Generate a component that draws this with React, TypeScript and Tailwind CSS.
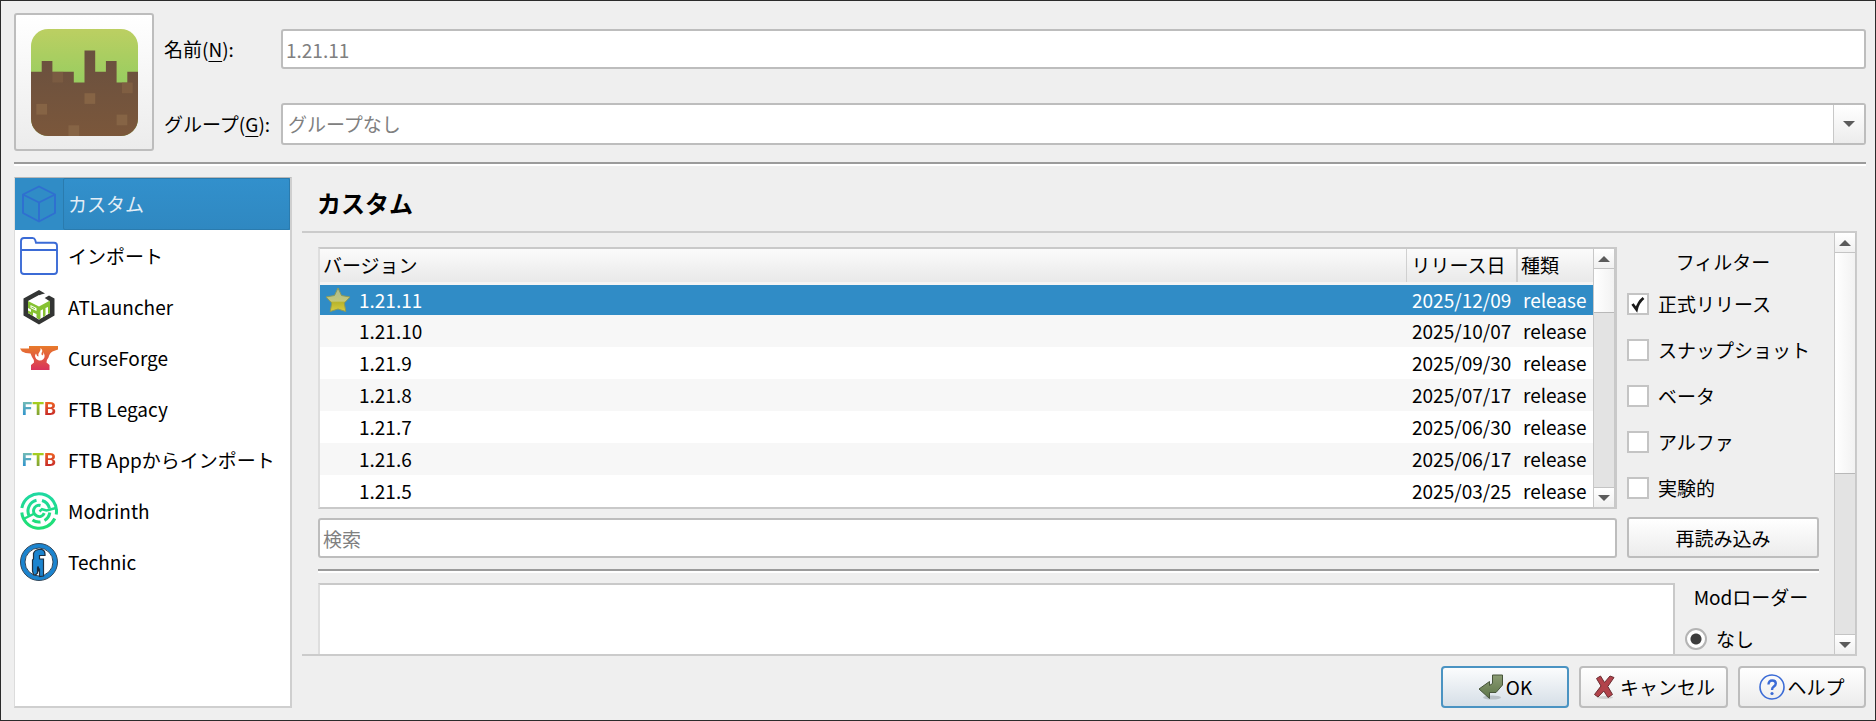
import { clsx } from "clsx";
import type { ReactNode } from "react";

interface Version {
  id: string;
  date: string;
  type: string;
}

const versions: Version[] = [
  { id: "1.21.11", date: "2025/12/09", type: "release" },
  { id: "1.21.10", date: "2025/10/07", type: "release" },
  { id: "1.21.9", date: "2025/09/30", type: "release" },
  { id: "1.21.8", date: "2025/07/17", type: "release" },
  { id: "1.21.7", date: "2025/06/30", type: "release" },
  { id: "1.21.6", date: "2025/06/17", type: "release" },
  { id: "1.21.5", date: "2025/03/25", type: "release" },
];

const filters = [
  { label: "正式リリース", checked: true },
  { label: "スナップショット", checked: false },
  { label: "ベータ", checked: false },
  { label: "アルファ", checked: false },
  { label: "実験的", checked: false },
];

function GrassIcon() {
  return (
    <svg viewBox="0 0 100 100" className="size-[107px]" aria-hidden>
      <defs>
        <linearGradient id="grass" x1="0" y1="0" x2="0" y2="1">
          <stop offset="0" stopColor="#bccf62" />
          <stop offset="0.5" stopColor="#98cd60" />
        </linearGradient>
        <linearGradient id="dirt" x1="0" y1="0" x2="0" y2="1">
          <stop offset="0" stopColor="#69503f" />
          <stop offset="1" stopColor="#7b573b" />
        </linearGradient>
        <clipPath id="block">
          <rect width="100" height="100" rx="16" />
        </clipPath>
      </defs>
      <g clipPath="url(#block)">
        <rect width="100" height="100" fill="url(#grass)" />
        <path
          d="M0 40H10V30H20V40H40V50H50V20H60V40H70V30H80V50H90V40H100V100H0Z"
          fill="url(#dirt)"
        />
        <g fill="#866445">
          <rect x="20" y="40" width="10" height="10" opacity="0.5" />
          <rect x="85" y="50" width="10" height="10" opacity="0.7" />
          <rect x="50" y="60" width="10" height="10" />
          <rect x="5" y="70" width="10" height="10" />
          <rect x="80" y="80" width="10" height="10" />
          <rect x="35" y="90" width="10" height="10" />
        </g>
      </g>
    </svg>
  );
}

function CubeIcon() {
  return (
    <svg
      viewBox="0 0 38 38"
      className="size-[38px]"
      fill="none"
      stroke="#2f6fd0"
      strokeWidth="1.9"
      strokeLinejoin="round"
      aria-hidden
    >
      <path d="M19 1.5 35 9.5V28L19 36.5 3 28V9.5ZM3 9.5 19 17.5 35 9.5M19 17.5V36.5" />
    </svg>
  );
}

function FolderIcon() {
  return (
    <svg
      viewBox="0 0 38 38"
      className="size-[38px]"
      fill="none"
      stroke="#3b6bd6"
      strokeWidth="1.9"
      aria-hidden
    >
      <path d="M1 34V4Q1 1 4 1H12.500Q14.500 1 15.200 3L16 5.800H34Q37 5.800 37 8.800V34Q37 37 34 37H4Q1 37 1 34ZM1 13H37" />
    </svg>
  );
}

function ATLauncherIcon() {
  return (
    <svg viewBox="0 0 38 38" className="size-[38px]" aria-hidden>
      <path
        d="M25 5.500 19 2 3.500 10.500V27.500L19 36.500 34.500 27.500V10.500L29 7.500 23 11 29.500 14.500V25L19 31.500 8.500 25V13.500L21 6.500Z"
        fill="#333534"
      />
      <path d="M19 7 25.500 10.500 30 13.500V25L19 31.500 8 25V13Z" fill="#fff" />
      <path
        d="M8 13 19 18.500 30 12.500V25L28 26V19L25.500 20V27.500L23 29V21.300L20.500 22.500V31L18 31 16.500 29.500V26L13 24.500V28L8 25V22.500L11 24V21.500L8 20Z"
        fill="#86c232"
      />
      <path d="M10.500 17 16.500 20V23L10.500 20Z" fill="#fff" />
      <path d="M11.500 18.500 15 20.300V21.300L11.500 19.600Z" fill="#86c232" />
    </svg>
  );
}

function CurseForgeIcon() {
  return (
    <svg viewBox="0 0 38 38" className="size-[38px]" aria-hidden>
      <defs>
        <linearGradient id="forge" x1="0" y1="0" x2="0" y2="1">
          <stop offset="0" stopColor="#e87b2a" />
          <stop offset="1" stopColor="#d9335c" />
        </linearGradient>
      </defs>
      <path
        d="M9 7H38V10.500L32.500 12.500Q29.500 14 28.500 18.500 26 21.500 26.500 23.500L29.500 26V31H11V26L14 23.500Q14.500 21 12 18L10.500 14.500Q5 14.500 2 12.500L0 9.500H9Z"
        fill="url(#forge)"
      />
      <path
        d="M20.500 9Q23.500 11.500 21.500 14 21 15.500 22.500 16.500 24 15 23 13 26 17 23.500 20 21.500 22 19 21.500 15.500 20.500 15 17 15 15.500 16 14.500 16.500 17 18.500 17.500 17.500 15 19.500 13 21 11 20.500 9Z"
        fill="#fff"
      />
    </svg>
  );
}

function FtbIcon() {
  return (
    <span
      className="flex size-[38px] items-center justify-center font-[Roboto,sans-serif] text-[19px] leading-[38px] font-bold"
      aria-hidden
    >
      <span className="bg-linear-to-b from-[#74bcb4] from-30% to-[#258fce] to-70% bg-clip-text text-transparent">
        F
      </span>
      <span className="bg-linear-to-b from-[#a9d31c] from-30% to-[#7c9b34] to-70% bg-clip-text text-transparent">
        T
      </span>
      <span className="bg-linear-to-b from-[#ef6320] from-30% to-[#c32128] to-70% bg-clip-text text-transparent">
        B
      </span>
    </span>
  );
}

function ModrinthIcon() {
  return (
    <svg
      viewBox="0 0 38 38"
      className="size-[38px]"
      fill="none"
      stroke="url(#rinth)"
      strokeWidth="3"
      aria-hidden
    >
      <defs>
        <linearGradient
          id="rinth"
          gradientUnits="userSpaceOnUse"
          x1="0"
          y1="0"
          x2="0"
          y2="38"
        >
          <stop offset="0" stopColor="#1fd8a4" />
          <stop offset="1" stopColor="#1fe070" />
        </linearGradient>
      </defs>
      <path d="M1.800 16A17.400 17.400 0 0 1 36.200 22.500" />
      <path d="M34.800 26.500A17.400 17.400 0 0 1 1.800 20.500" />
      <path d="M16.500 8.300A11 11 0 0 0 9.200 24" />
      <path d="M22 8.500A11 11 0 0 1 29.500 16.500" />
      <path d="M29.800 20.500A11 11 0 0 1 24.500 28.500" />
      <path d="M20.500 30A11 11 0 0 1 12.500 28" />
      <path d="M20.500 13.500A5.600 5.600 0 1 0 24.300 21.200" />
      <path d="M19.500 19.500 22 17.200 26.500 18.500 36 16" strokeWidth="2.500" />
      <path d="M3.500 27 9.500 24 14.500 21.500" strokeWidth="2.500" />
    </svg>
  );
}

function TechnicIcon() {
  return (
    <svg viewBox="0 0 38 38" className="size-[38px]" aria-hidden>
      <circle cx="19" cy="19" r="18.500" fill="#1b84cf" stroke="#33475a" />
      <circle cx="19" cy="19" r="14" fill="#fff" stroke="#33475a" />
      <path
        d="M13.500 31.500 12.500 28V17L13.500 16V10.500Q14.500 7 18.500 6.500H22Q25 7.500 25 11V12.500H19.500V16H23.500V33L19.500 33.500V26L17.500 25.500V30L15.500 32Z"
        fill="#1b84cf"
        stroke="#203040"
        strokeWidth="1.200"
      />
      <path d="M17 23.500H19V28L17.500 30Z" fill="#16283a" />
    </svg>
  );
}

function StarIcon() {
  return (
    <svg viewBox="0 0 26 26" className="size-[26px]" aria-hidden>
      <defs>
        <linearGradient id="star" x1="0" y1="0" x2="0" y2="1">
          <stop offset="0" stopColor="#a9bb93" />
          <stop offset="0.55" stopColor="#c3c77a" />
          <stop offset="0.62" stopColor="#b9b52c" />
          <stop offset="1" stopColor="#d8cc40" />
        </linearGradient>
      </defs>
      <path
        d="M13 1 16.500 8.500 25 10 19.300 16 20.800 24.500 13 22 5.200 24.500 6.700 16 1 10 9.500 8.500Z"
        fill="url(#star)"
        stroke="#8d9a58"
        strokeLinejoin="round"
      />
    </svg>
  );
}

function OkIcon() {
  return (
    <svg viewBox="0 0 26 26" className="size-[26px]" aria-hidden>
      <defs>
        <linearGradient id="enter" x1="0" y1="0" x2="0" y2="1">
          <stop offset="0" stopColor="#8b9c74" />
          <stop offset="1" stopColor="#5c7447" />
        </linearGradient>
      </defs>
      <ellipse cx="14" cy="23.500" rx="9" ry="2" fill="#b9c1c6" />
      <path
        d="M14.500 1H24.500V11L18 18.500H11.500V24.500L1 15 11.500 7.500V11.500L14.500 9.500Z"
        fill="url(#enter)"
        stroke="#46543a"
        strokeLinejoin="round"
      />
    </svg>
  );
}

function CancelIcon() {
  return (
    <svg viewBox="0 0 26 26" className="size-[26px]" aria-hidden>
      <ellipse cx="13" cy="23.500" rx="8" ry="1.500" fill="#cfcfcf" />
      <path
        d="M4.500 4.500 8.500 2 12.500 8.500 18 2 22 3.500 15.800 12.500 20.500 20.500 16 23.500 11.800 17 6 23 2.500 20.500 9 12Z"
        fill="#b2434b"
        stroke="#6b2c31"
        strokeLinejoin="round"
      />
    </svg>
  );
}

function HelpIcon() {
  return (
    <svg
      viewBox="0 0 26 26"
      className="size-[26px]"
      fill="none"
      stroke="#3b6bd6"
      aria-hidden
    >
      <circle cx="13" cy="13" r="12" strokeWidth="1.600" />
      <path
        d="M9.500 10.500Q9.500 6.500 13.200 6.500 16.800 6.500 16.800 9.600 16.800 11.400 14.800 12.600 13 13.800 13 16"
        strokeWidth="2.400"
      />
      <circle cx="13" cy="19.500" r="1.600" fill="#3b6bd6" stroke="none" />
    </svg>
  );
}

function Arrow({ up = false }: { up?: boolean }) {
  return (
    <svg viewBox="0 0 12 6" className="h-[6px] w-3" fill="#5b5b5b" aria-hidden>
      <path d={up ? "M6 0 12 6H0Z" : "M0 0H12L6 6Z"} />
    </svg>
  );
}

// thumbClass sets the share of the track that is in view
function ScrollBar({
  label,
  thumbClass,
}: {
  label: string;
  thumbClass: string;
}) {
  return (
    <div className="flex w-[22px] shrink-0 flex-col border-x border-[#c8c8c8] bg-[#e3e3e3]">
      <button
        type="button"
        aria-label={`${label} 上へ`}
        className="flex h-5 shrink-0 items-center justify-center border-b border-[#c4c4c4] bg-linear-to-b from-white to-[#f0f0f0]"
      >
        <Arrow up />
      </button>
      <div className="min-h-0 flex-1">
        <div
          className={clsx(
            "border-b border-[#b8b8b8] bg-linear-to-r from-white to-[#f2f2f2]",
            thumbClass,
          )}
        />
      </div>
      <button
        type="button"
        aria-label={`${label} 下へ`}
        className="flex h-5 shrink-0 items-center justify-center border-t border-[#c4c4c4] bg-linear-to-b from-white to-[#f0f0f0]"
      >
        <Arrow />
      </button>
    </div>
  );
}

const sources: { label: string; icon: ReactNode }[] = [
  { label: "カスタム", icon: <CubeIcon /> },
  { label: "インポート", icon: <FolderIcon /> },
  { label: "ATLauncher", icon: <ATLauncherIcon /> },
  { label: "CurseForge", icon: <CurseForgeIcon /> },
  { label: "FTB Legacy", icon: <FtbIcon /> },
  { label: "FTB Appからインポート", icon: <FtbIcon /> },
  { label: "Modrinth", icon: <ModrinthIcon /> },
  { label: "Technic", icon: <TechnicIcon /> },
];

function InstanceHeader() {
  return (
    <header className="flex gap-[10px] border-b-2 border-[#9b9b9b] pb-[11px]">
      <button
        type="button"
        aria-label="アイコン"
        className="flex h-[138px] w-[140px] shrink-0 items-center justify-center rounded-[3px] border-2 border-[#bdbdbd] bg-linear-to-b from-white to-[#ececec]"
      >
        <GrassIcon />
      </button>
      <div className="flex flex-1 flex-col justify-between pt-4 pb-[6px]">
        <div className="flex items-center">
          <label htmlFor="name" className="w-[117px] shrink-0">
            名前(<span className="underline underline-offset-4">N</span>):
          </label>
          <input
            id="name"
            type="text"
            placeholder="1.21.11"
            className="h-10 min-w-0 flex-1 rounded-[3px] border-2 border-[#bdbdbd] bg-white px-[3px] placeholder:text-[#808080]"
          />
        </div>
        <div className="flex items-center">
          <label htmlFor="group" className="w-[117px] shrink-0">
            グループ(<span className="underline underline-offset-4">G</span>):
          </label>
          <div className="relative flex-1">
            <select
              id="group"
              className="block h-[42px] w-full appearance-none rounded-[3px] border-2 border-[#bdbdbd] bg-white px-[5px] text-[#808080]"
            >
              <option>グループなし</option>
            </select>
            <span className="pointer-events-none absolute inset-y-[2px] right-[2px] flex w-[31px] items-center justify-center border-l border-[#c8c8c8] bg-linear-to-b from-white to-[#ececec]">
              <Arrow />
            </span>
          </div>
        </div>
      </div>
    </header>
  );
}

function SourceList() {
  return (
    <nav className="w-[278px] shrink-0 border-t border-r-2 border-b-2 border-l border-t-[#b8b8b8] border-r-[#cfcfcf] border-b-[#cfcfcf] border-l-[#dcdcdc] bg-white">
      {sources.map((source, index) => (
        <button
          key={source.label}
          type="button"
          aria-current={index === 0 ? "page" : undefined}
          className={clsx(
            "flex w-full items-center text-left",
            index === 0
              ? "h-[52px] bg-[#308cc6] text-[#e3eef6]"
              : "h-[51px] text-black",
          )}
        >
          <span className="pl-[5px]">{source.icon}</span>
          <span
            className={clsx(
              "ml-[5px] flex h-full flex-1 items-center border pl-1 whitespace-nowrap",
              index === 0
                ? "rounded-[2px] border-[#2a7bae] bg-linear-to-b from-[#3290cc] to-[#2f88c1]"
                : "border-transparent",
            )}
          >
            {source.label}
          </span>
        </button>
      ))}
    </nav>
  );
}

function VersionTable() {
  return (
    <div className="flex min-w-0 border-2 border-[#c9c9c9] border-l-[#dedede] bg-white">
      <table className="flex-1 table-fixed border-collapse text-left">
        <colgroup>
          <col />
          <col className="w-[111px]" />
          <col className="w-[76px]" />
        </colgroup>
        <thead>
          <tr className="h-[34px] border-b-[3px] border-[#f4f4f4]">
            <th className="border-r border-b-2 border-[#b0b0b0] border-r-[#d0d0d0] bg-linear-to-b from-[#fbfbfb] to-[#e9e9e9] px-[3px] font-normal">
              バージョン
            </th>
            <th className="border-r-2 border-b-2 border-[#b0b0b0] border-r-[#d0d0d0] bg-linear-to-b from-[#fbfbfb] to-[#e9e9e9] pl-[5px] font-normal whitespace-nowrap">
              リリース日
            </th>
            <th className="border-b-2 border-[#b0b0b0] bg-linear-to-b from-[#fbfbfb] to-[#e9e9e9] pl-[3px] font-normal">
              種類
            </th>
          </tr>
        </thead>
        <tbody>
          {versions.map((version, index) => (
            <tr
              key={version.id}
              className={clsx(
                "h-8",
                index === 0
                  ? "bg-[#308cc6] text-white"
                  : "odd:bg-white even:bg-[#f7f7f7]",
              )}
            >
              <td className="p-0">
                <span className="flex items-center gap-2">
                  <span className="ml-[5px] size-[26px]">
                    {index === 0 && <StarIcon />}
                  </span>
                  {version.id}
                </span>
              </td>
              <td className="p-0 pl-[6px]">{version.date}</td>
              <td className="p-0 pl-[6px]">{version.type}</td>
            </tr>
          ))}
        </tbody>
      </table>
      <ScrollBar label="バージョン" thumbClass="h-[20%]" />
    </div>
  );
}

function FilterPanel() {
  return (
    <fieldset className="flex w-[192px] shrink-0 flex-col">
      <legend className="w-full pt-px text-center leading-7">フィルター</legend>
      <div className="flex flex-col gap-[18px] pt-[14px]">
        {filters.map((filter) => (
          <label
            key={filter.label}
            className="flex h-7 items-center gap-[9px] whitespace-nowrap"
          >
            <span className="relative flex size-[22px]">
              <input
                type="checkbox"
                defaultChecked={filter.checked}
                className="peer size-[22px] appearance-none border-2 border-[#c4c4c4] bg-white"
              />
              <svg
                viewBox="0 0 22 22"
                className="pointer-events-none absolute inset-0 hidden size-[22px] peer-checked:block"
                fill="none"
                stroke="#1a1a1a"
                strokeWidth="2.800"
                aria-hidden
              >
                <path d="M5.500 11 9.500 16.500Q11 9.500 16.500 5" />
              </svg>
            </span>
            {filter.label}
          </label>
        ))}
      </div>
    </fieldset>
  );
}

function CustomPage() {
  return (
    <div className="flex min-h-0 flex-1 border-y-2 border-r border-[#cbcbcb]">
      <div className="min-w-0 flex-1 overflow-hidden pt-[14px] pr-[15px] pl-4">
        <div className="flex gap-[10px]">
          <div className="flex min-w-0 flex-1 flex-col gap-[9px]">
            <VersionTable />
            <input
              type="search"
              aria-label="検索"
              placeholder="検索"
              className="h-10 rounded-[3px] border-2 border-[#bdbdbd] bg-white px-[3px] placeholder:text-[#808080]"
            />
          </div>
          <div className="flex flex-col justify-between">
            <FilterPanel />
            <button
              type="button"
              className="h-[41px] rounded-[3px] border-2 border-[#bdbdbd] bg-linear-to-b from-white to-[#ececec]"
            >
              再読み込み
            </button>
          </div>
        </div>
        <hr className="mt-[11px] border-t-2 border-[#9b9b9b]" />
        <div className="flex gap-2 border-t-2 border-white pt-[10px]">
          <div className="h-[240px] flex-1 border-2 border-[#c9c9c9] border-l-[#dedede] bg-white" />
          <fieldset className="w-[136px]">
            <legend className="w-full text-center leading-7">
              Modローダー
            </legend>
            <label className="flex items-center gap-[9px] pt-[14px] pl-[2px] leading-7">
              <input
                type="radio"
                name="loader"
                defaultChecked
                className="size-[22px] appearance-none rounded-full border-2 border-[#b4b4b4] bg-[radial-gradient(circle,#3d3d3d_5px,#fff_6px)]"
              />
              なし
            </label>
          </fieldset>
        </div>
      </div>
      <ScrollBar label="ページ" thumbClass="h-[58%]" />
    </div>
  );
}

function DialogButton({
  icon,
  children,
  className,
}: {
  icon: ReactNode;
  children: ReactNode;
  className: string;
}) {
  return (
    <button
      type="button"
      className={clsx(
        "flex h-[42px] items-center justify-center gap-[2px] rounded-[4px] border-2 bg-linear-to-b whitespace-nowrap",
        className,
      )}
    >
      {icon}
      {children}
    </button>
  );
}

export default function App() {
  return (
    <div className="flex h-screen flex-col border border-[#2b2b2b] bg-[#efefef] pt-3 pr-[9px] pb-3 pl-[13px] font-['Noto_Sans_CJK_JP',sans-serif] text-[19px] leading-7 text-black">
      <InstanceHeader />
      <div className="flex min-h-0 flex-1 border-t-2 border-white pt-[11px]">
        <SourceList />
        <div className="flex min-w-0 flex-1 flex-col">
          <main className="flex min-h-0 flex-1 flex-col pr-[9px] pl-[10px]">
            <h1 className="pt-[9px] pb-[11px] pl-[15px] text-[24px] leading-[34px] font-bold">
              カスタム
            </h1>
            <CustomPage />
          </main>
          <footer className="flex justify-end gap-[10px] pt-[10px]">
            <DialogButton
              icon={<OkIcon />}
              className="w-[128px] border-[#4a93c2] from-[#fbfcfd] to-[#d6dfe7]"
            >
              OK
            </DialogButton>
            <DialogButton
              icon={<CancelIcon />}
              className="w-[149px] border-[#bdbdbd] from-white to-[#ececec]"
            >
              キャンセル
            </DialogButton>
            <DialogButton
              icon={<HelpIcon />}
              className="w-[128px] border-[#bdbdbd] from-white to-[#ececec]"
            >
              ヘルプ
            </DialogButton>
          </footer>
        </div>
      </div>
    </div>
  );
}
